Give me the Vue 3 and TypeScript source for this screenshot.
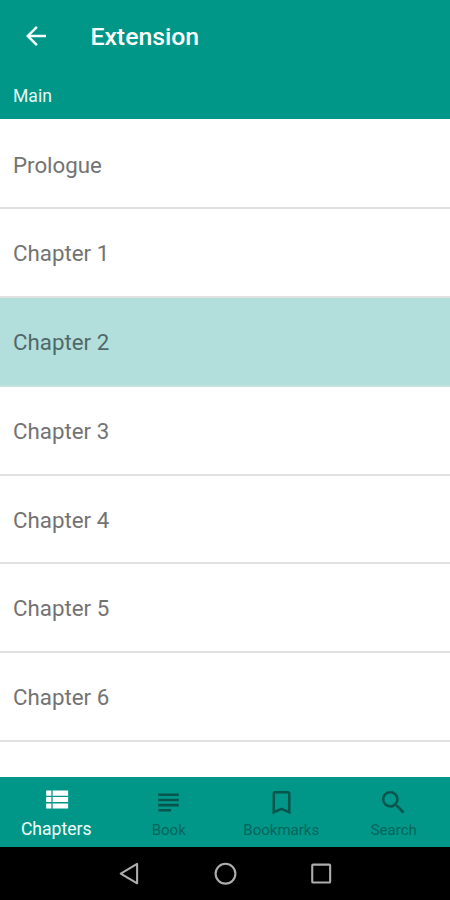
<script setup lang="ts">
import { ref } from 'vue'

interface Tab {
  label: string
  path: string
}

const chapters: string[] = [
  'Prologue',
  'Chapter 1',
  'Chapter 2',
  'Chapter 3',
  'Chapter 4',
  'Chapter 5',
  'Chapter 6',
]

const tabs: Tab[] = [
  {
    label: 'Chapters',
    path: 'M4 14h4v-4H4v4zm0 5h4v-4H4v4zM4 9h4V5H4v4zm5 5h12v-4H9v4zm0 5h12v-4H9v4zM9 5v4h12V5H9z',
  },
  {
    label: 'Book',
    path: 'M14 17H4v2h10v-2zm6-8H4v2h16V9zM4 15h16v-2H4v2zM4 5v2h16V5H4z',
  },
  {
    label: 'Bookmarks',
    path: 'M17 3H7c-1.1 0-2 .9-2 2v16l7-3 7 3V5c0-1.1-.9-2-2-2zm0 15l-5-2.18L7 18V5h10v13z',
  },
  {
    label: 'Search',
    path: 'M15.5 14h-.79l-.28-.27A6.47 6.47 0 0 0 16 9.5 6.5 6.5 0 1 0 9.5 16c1.61 0 3.09-.59 4.23-1.57l.27.28v.79l5 4.99L20.49 19l-4.99-5zm-6 0C7.01 14 5 11.99 5 9.5S7.01 5 9.5 5 14 7.01 14 9.5 11.99 14 9.5 14z',
  },
]

const current = ref(2)
const activeTab = ref(0)
</script>

<template>
  <div class="screen">
    <header class="app-bar">
      <button class="back" aria-label="Back">
        <svg viewBox="0 0 24 24"><path d="M20 11H7.83l5.59-5.59L12 4l-8 8 8 8 1.41-1.41L7.83 13H20v-2z" /></svg>
      </button>
      <h1 class="title">Extension</h1>
    </header>
    <div class="section">Main</div>
    <main class="list">
      <div
        v-for="(name, i) in chapters"
        :key="name"
        class="row"
        :class="{ selected: i === current }"
        @click="current = i"
      >
        {{ name }}
      </div>
    </main>
    <nav class="tabs">
      <button
        v-for="(tab, i) in tabs"
        :key="tab.label"
        class="tab"
        :class="{ active: i === activeTab }"
        @click="activeTab = i"
      >
        <svg viewBox="0 0 24 24"><path :d="tab.path" /></svg>
        <span>{{ tab.label }}</span>
      </button>
    </nav>
    <footer class="system">
      <svg viewBox="0 0 24 24"><path d="M19.3 2.8v18.6L3.6 12.1z" /></svg>
      <svg viewBox="0 0 24 24"><circle cx="12" cy="12.2" r="9.5" /></svg>
      <svg viewBox="0 0 24 24"><rect x="3.1" y="3.5" width="17.2" height="17.2" rx="0.8" /></svg>
    </footer>
  </div>
</template>

<style>
body {
  margin: 0;
  background: #fff;
}
</style>

<style scoped>
.screen {
  display: flex;
  flex-direction: column;
  width: 450px;
  height: 900px;
  overflow: hidden;
  font-family: Roboto, sans-serif;
  background: #fff;
}
button {
  margin: 0;
  padding: 0;
  border: 0;
  background: none;
  font: inherit;
}
.app-bar {
  flex: none;
  display: flex;
  align-items: center;
  height: 71px;
  padding: 1px 0 0 21px;
  box-sizing: border-box;
  background: #009788;
  color: #fff;
}
.back {
  width: 30px;
  height: 30px;
}
.back svg {
  display: block;
  width: 30px;
  height: 30px;
  fill: #f2fffc;
}
.title {
  margin: 0 0 0 39.4px;
  padding-top: 2px;
  font-size: 24.8px;
  line-height: 30px;
  font-weight: 500;
}
.section {
  flex: none;
  height: 48px;
  padding-left: 13px;
  background: #009788;
  color: #e6f7f4;
  font-size: 17.6px;
  line-height: 50px;
}
.list {
  flex: 1;
  min-height: 0;
  padding-top: 1.5px;
  overflow: hidden;
}
.row {
  height: 88.75px;
  box-sizing: border-box;
  padding-left: 13px;
  border-bottom: 2px solid #e0e0e0;
  color: #737373;
  font-size: 22.3px;
  line-height: 89.4px;
}
.row.selected {
  border-bottom-color: #c5e2de;
  background: #b2dfdb;
  color: #50686a;
}
.tabs {
  flex: none;
  display: flex;
  height: 70px;
  background: #009788;
}
.tab {
  flex: 1;
  display: flex;
  flex-direction: column;
  align-items: center;
  padding-top: 9.5px;
  color: #04655c;
  font-size: 15px;
  line-height: 20px;
}
.tab svg {
  flex: none;
  width: 31px;
  height: 31px;
  margin-bottom: 2px;
  fill: #06564e;
}
.tab.active {
  padding-top: 7px;
  color: #f4fffd;
  font-size: 17.6px;
  line-height: 22px;
}
.tab.active svg {
  margin-bottom: 3px;
  fill: #fff;
}
.system {
  flex: none;
  display: flex;
  justify-content: center;
  align-items: center;
  gap: 71px;
  height: 53px;
  background: #000;
}
.system svg {
  width: 25px;
  height: 25px;
  fill: none;
  stroke: #adadad;
  stroke-width: 2;
  stroke-linejoin: round;
}
</style>
